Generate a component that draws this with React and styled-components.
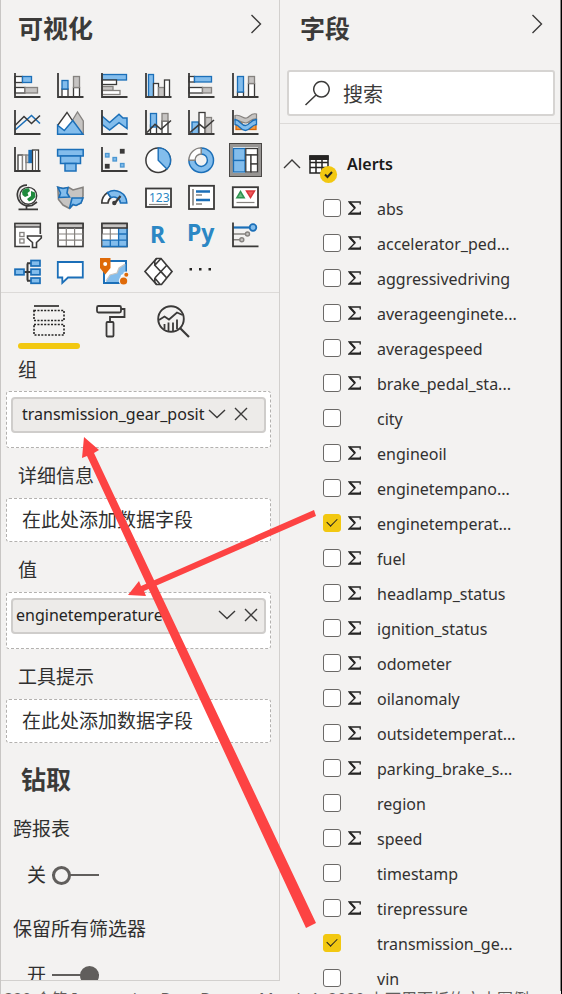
import React, { useState } from "react";
import styled, { createGlobalStyle } from "styled-components";

const INK = "#3b3a39";
const BLUE = "#1b6fb8";
const SKY = "#83bdec";
const GREY = "#c6c4c2";
const MID = "#85827f";

const GlobalStyle = createGlobalStyle`
  *, *::before, *::after { box-sizing: border-box; }
  body {
    margin: 0;
    background: #f3f2f1;
    color: #303030;
    font-family: "Noto Sans", "Noto Sans CJK SC", sans-serif;
  }
  button, input { font: inherit; color: inherit; }
  button { background: none; border: 0; padding: 0; cursor: pointer; }
`;

const Page = styled.div`
  position: relative;
  display: flex;
  flex-direction: column;
  height: 100vh;
  overflow: hidden;
  border-left: 1px solid #c8c6c4;
  border-right: 1px solid #000;
`;

const Panes = styled.main`
  flex: 1;
  min-height: 0;
  display: grid;
  grid-template-columns: minmax(0, 279fr) minmax(0, 281fr);
`;

const Pane = styled.section`
  display: flex;
  flex-direction: column;
  min-height: 0;
  overflow: hidden;
  border-right: 1px solid ${(p) => (p.$edge ? "#8a8886" : "#d2d0ce")};
  border-bottom: ${(p) => (p.$edge ? "0" : "1px solid #d2d0ce")};
  margin-bottom: ${(p) => (p.$edge ? "0" : "10px")};
`;

const Head = styled.header`
  display: flex;
  flex: none;
  align-items: flex-start;
  justify-content: space-between;
  height: ${(p) => p.$h}px;
  padding: 10px 17px 0 ${(p) => p.$pad}px;
`;

const Title = styled.h2`
  margin: 0;
  font-size: 25px;
  line-height: 36px;
  font-weight: 700;
  color: #3b3a39;
`;

const IconButton = styled.button`
  display: flex;
  align-items: center;
  justify-content: center;
  flex: none;
  width: ${(p) => p.$w || 24}px;
  height: 28px;
`;

const Gallery = styled.div`
  display: grid;
  flex: none;
  grid-template-columns: repeat(6, minmax(0, 1fr));
  grid-auto-rows: 37px;
  justify-items: center;
  align-items: center;
  padding: 0 12px 3px 4px;
  border-bottom: 1px solid #dcdad8;
`;

const Visual = styled.button`
  display: flex;
  align-items: center;
  justify-content: center;
  width: 33px;
  height: 34px;
  border: ${(p) => (p.$on ? "1px solid #4a4846" : "0")};
  box-shadow: ${(p) => (p.$on ? "inset 0 0 0 3px #979593" : "none")};
`;

const Tabs = styled.div`
  display: flex;
  flex: none;
  padding: 4px 0 0 17px;
`;

const Tab = styled.button`
  display: flex;
  flex-direction: column;
  align-items: center;
  justify-content: space-between;
  width: 62px;
  height: 52px;
  padding-top: 7px;
  &::after {
    content: "";
    width: 100%;
    height: 6px;
    border-radius: 3px;
    background: ${(p) => (p.$on ? "#f2c811" : "transparent")};
  }
`;

const Well = styled.div`
  flex: none;
`;

const WellLabel = styled.h3`
  margin: 0;
  padding: ${(p) => (p.$first ? 7 : 14)}px 17px 0;
  height: ${(p) => (p.$first ? 42 : 50)}px;
  font-size: 19px;
  line-height: 28px;
  font-weight: 400;
`;

const Drop = styled.div`
  margin: 0 8px 0 5px;
  padding: ${(p) => (p.$filled ? "5px 4px 14px 4px" : "0 15px")};
  border: 1px dashed #b3b1af;
  border-radius: 3px;
  background: #fff;
  font-size: 19px;
  line-height: 42px;
`;

const Pill = styled.div`
  display: flex;
  align-items: center;
  height: 36px;
  padding: 0 ${(p) => (p.$wide ? 1 : 11)}px 2px ${(p) => (p.$wide ? 3 : 9)}px;
  border: 2px solid #cfcdcb;
  border-radius: 4px;
  background: #edebe9;
  font-size: 16px;
  line-height: 28px;
  color: #252423;
`;

const PillText = styled.span`
  flex: 1;
  min-width: 0;
  white-space: nowrap;
`;

const Section = styled.h2`
  flex: none;
  margin: 0;
  padding: 18px 20px 0;
  height: 72px;
  font-size: 25px;
  line-height: 36px;
  font-weight: 700;
  color: #3b3a39;
`;

const Option = styled.div`
  flex: none;
  height: 100px;
  padding-left: 12px;
  font-size: 19px;
  line-height: 28px;
`;

const SwitchRow = styled.label`
  display: flex;
  align-items: center;
  gap: 6px;
  margin-top: 18px;
  padding-left: 14px;
`;

const Switch = styled.input`
  appearance: none;
  display: flex;
  align-items: center;
  width: 47px;
  height: 19px;
  margin: 0;
  justify-content: ${(p) => (p.checked ? "flex-end" : "flex-start")};
  background: linear-gradient(#605e5c, #605e5c) center / 100% 2px no-repeat;
  &::before {
    content: "";
    width: 19px;
    height: 19px;
    border: 3px solid #605e5c;
    border-radius: 50%;
    background: ${(p) => (p.checked ? "#605e5c" : "#f3f2f1")};
  }
`;

const SearchArea = styled.div`
  flex: none;
  padding: 0 5px 7px 7px;
  border-bottom: 1px solid #dcdad8;
`;

const SearchBox = styled.label`
  display: flex;
  align-items: center;
  gap: 13px;
  height: 46px;
  padding: 0 15px;
  border: 2px solid #d6d4d2;
  border-radius: 3px;
  background: #fff;
`;

const SearchInput = styled.input`
  flex: 1;
  min-width: 0;
  border: 0;
  padding: 4px 0 0;
  outline: 0;
  background: transparent;
  font-size: 20px;
  line-height: 28px;
  &::placeholder { color: #3b3a39; opacity: 1; }
`;

const TableRow = styled.div`
  display: flex;
  flex: none;
  align-items: center;
  height: 66px;
  padding: 13px 0 0 2px;
  font-size: 16px;
  font-weight: 600;
  color: #1b1a19;
`;

const TableIcon = styled.span`
  display: flex;
  width: 30px;
  height: 30px;
  margin: 10px 9px 0 6px;
`;

const Fields = styled.ul`
  flex: 1;
  min-height: 0;
  overflow: hidden;
  margin: 0;
  padding: 0;
  list-style: none;
`;

const FieldRow = styled.label`
  display: grid;
  grid-template-columns: 18px 13px minmax(0, 1fr);
  column-gap: 7px;
  align-items: center;
  height: 35px;
  padding-left: 43px;
  font-size: 16px;
  color: #323130;
`;

const Box = styled.input`
  appearance: none;
  width: 18px;
  height: 18px;
  margin: 0;
  border: 1px solid ${(p) => (p.checked ? "#f2c811" : "#6b6967")};
  border-radius: 3px;
  background: ${(p) => (p.checked ? "#f2c811" : "#fff")};
  display: grid;
  place-items: center;
  &::before {
    content: "";
    display: ${(p) => (p.checked ? "block" : "none")};
    width: 10px;
    height: 6px;
    border: solid #252423;
    border-width: 0 0 1px 1px;
    transform: rotate(-45deg);
    margin-bottom: 3px;
  }
`;

const FieldName = styled.span`
  padding: 2px 0 0 9px;
  white-space: nowrap;
  overflow: hidden;
`;

const Caption = styled.footer`
  flex: none;
  height: 3px;
  padding-left: 3px;
  overflow: hidden;
  font-size: 16px;
  line-height: 17px;
  white-space: nowrap;
  color: #605e5c;
`;

const Arrows = styled.svg`
  position: absolute;
  top: 0;
  left: -1px;
  pointer-events: none;
`;

function R({ x, y, x2, y2, f = "#fff", s = INK, w = 1.3 }) {
  return <rect x={x} y={y} width={x2 - x} height={y2 - y} fill={f} stroke={s} strokeWidth={w} />;
}
function L({ d, s = INK, w = 1.6, f = "none" }) {
  return <path d={d} stroke={s} strokeWidth={w} fill={f} />;
}
const Axis = () => <L d="M2 1V25H27.5" w={1.8} />;

const visuals = [
  ["堆积条形图", <>
    <R x={2} y={4.5} x2={9.5} y2={10.5} /><R x={9.5} y={4.5} x2={18.5} y2={10.5} f={SKY} s={BLUE} />
    <R x={2} y={15.5} x2={12} y2={21} /><R x={12} y={15.5} x2={24.5} y2={21} f={GREY} s={MID} /><Axis /></>],
  ["堆积柱形图", <>
    <R x={6} y={17} x2={12} y2={25} /><R x={6} y={8.5} x2={12} y2={17} f={SKY} s={BLUE} />
    <R x={17.5} y={15.5} x2={23.5} y2={25} /><R x={17.5} y={4.5} x2={23.5} y2={15.5} f={GREY} s={MID} /><Axis /></>],
  ["簇状条形图", <>
    <R x={2} y={2.5} x2={26.5} y2={8} f={SKY} s={BLUE} /><R x={2} y={8} x2={16.5} y2={12.5} />
    <R x={2} y={14.5} x2={13} y2={18.5} f={GREY} s={MID} /><R x={2} y={18.5} x2={20} y2={22.5} s={MID} /><Axis /></>],
  ["簇状柱形图", <>
    <R x={4.5} y={2.5} x2={9.5} y2={25} f={SKY} s={BLUE} /><R x={9.5} y={11.5} x2={14.5} y2={25} />
    <R x={14.5} y={15.5} x2={20.5} y2={25} f={GREY} s={MID} /><R x={20.5} y={8} x2={25.5} y2={25} /><Axis /></>],
  ["百分比堆积条形图", <>
    <R x={2} y={4.5} x2={7.5} y2={10} /><R x={7.5} y={4.5} x2={24.5} y2={10} f={SKY} s={BLUE} />
    <R x={2} y={15.5} x2={15.5} y2={21} /><R x={15.5} y={15.5} x2={24.5} y2={21} f={GREY} s={MID} /><Axis /></>],
  ["百分比堆积柱形图", <>
    <R x={6.5} y={20} x2={12.5} y2={25} /><R x={6.5} y={4.5} x2={12.5} y2={20} f={SKY} s={BLUE} />
    <R x={17.5} y={11.5} x2={23.5} y2={25} /><R x={17.5} y={4.5} x2={23.5} y2={11.5} f={GREY} s={MID} /><Axis /></>],
  ["折线图", <>
    <L d="M2 21L18.5 6.5L27 14.5" s={BLUE} /><L d="M2 16.5L11 7.5L18.5 14.5L27 6.5" /><Axis /></>],
  ["分区图", <>
    <L d="M16 12L21.5 3L27.3 12V25.3H16Z" f={GREY} s={MID} w={1.3} />
    <L d="M1.6 16.5L11 3.5L18 14V25.3H1.6Z" f="#fff" w={1.3} />
    <L d="M1.6 25.3V16.3L8.3 21.5L16.8 11.5L27 25.3Z" f={SKY} s={BLUE} w={1.4} /></>],
  ["堆积面积图", <>
    <L d="M2 7L9.6 13.6L19 5.3L23 9H27V19.6L19 13.6L9.6 21L2 15.3Z" f={SKY} s={BLUE} w={1.5} /><Axis /></>],
  ["折线和堆积柱形图", <>
    <R x={6.5} y={16} x2={12.5} y2={25} /><R x={6.5} y={4.5} x2={12.5} y2={18} f={SKY} s={BLUE} />
    <R x={18} y={12} x2={24} y2={25} /><R x={18} y={4.5} x2={24} y2={12} f={GREY} s={MID} />
    <L d="M3 23.5L11 15.3L17 20.3L27 11.5" /><Axis /></>],
  ["折线和簇状柱形图", <>
    <R x={5} y={13} x2={11.5} y2={25} f={SKY} s={BLUE} /><R x={12} y={3.5} x2={18} y2={25} />
    <R x={18.5} y={8.5} x2={24.5} y2={25} f={GREY} s={MID} /><L d="M3 23.5L12.5 15.3L17.5 19.3L27 11" /><Axis /></>],
  ["功能区图表", <>
    <R x={5} y={12} x2={11} y2={20.5} f="#f59b42" s="#d96a0b" /><R x={18} y={14} x2={25} y2={20.5} f="#f59b42" s="#d96a0b" />
    <L d="M4 6.5C10 5 12 10 15.5 9C19 8 20 3.5 25.5 5V10C20 9.5 19 13.5 15 14C11 14 9 11 4 11.5Z" f={GREY} s={MID} w={1.2} />
    <L d="M4 10.5C9 11 10 16.5 14.5 16.5C19 16.5 19 10.5 25.5 10.5V15.5C21 15.5 19 21.5 14.5 21.5C9 21.5 9 16 4 15.5Z" f={SKY} s={BLUE} w={1.3} /><Axis /></>],
  ["瀑布图", <>
    <R x={5} y={9} x2={9.5} y2={25} /><R x={9.5} y={9} x2={13} y2={25} s={MID} />
    <R x={13} y={9} x2={16.5} y2={16.5} f={GREY} s={MID} /><R x={16} y={4.5} x2={18.8} y2={16.5} f={BLUE} s={BLUE} />
    <R x={19.5} y={4} x2={25.5} y2={25} /><L d="M22.5 4V25" w={1} s={MID} /><Axis /></>],
  ["漏斗图", <>
    <R x={1.6} y={3.5} x2={27.2} y2={10} f={SKY} s={BLUE} w={1.5} /><R x={4.5} y={10} x2={24.5} y2={17.5} f={SKY} s={BLUE} w={1.5} />
    <R x={9} y={17.5} x2={20} y2={25} f={SKY} s={BLUE} w={1.5} /></>],
  ["散点图", <>
    <R x={20.5} y={3.5} x2={24} y2={7} f={INK} /><R x={5.5} y={7.5} x2={9} y2={11} f={SKY} s="#4a96d2" />
    <R x={13} y={11.5} x2={16.5} y2={15} f={SKY} s="#4a96d2" /><R x={5.5} y={18.5} x2={9} y2={22} f={INK} />
    <R x={20.5} y={17.5} x2={24} y2={21} f={SKY} s="#4a96d2" /><Axis /></>],
  ["饼图", <>
    <circle cx="14.2" cy="14.2" r="12.3" fill="#fff" stroke={INK} strokeWidth="1.5" />
    <L d="M14.2 14.2V1.9A12.3 12.3 0 0 1 22.9 22.9Z" f={SKY} s={BLUE} w={1.4} /></>],
  ["圆环图", <>
    <L d="M14.2 1.9A12.3 12.3 0 1 1 1.9 14.2H8A6.2 6.2 0 1 0 14.2 8Z" f={SKY} s={BLUE} w={1.5} />
    <L d="M14.2 1.9A12.3 12.3 0 0 0 1.9 14.2H8A6.2 6.2 0 0 1 14.2 8Z" f="#fff" s={MID} w={1.4} /></>],
  ["树状图", <>
    <R x={2.5} y={2.5} x2={14} y2={14.5} f={SKY} s={BLUE} /><R x={2.5} y={14.5} x2={14} y2={26} f={SKY} s={BLUE} />
    <R x={14.8} y={2.5} x2={26.5} y2={9} /><R x={14.8} y={9} x2={20} y2={26} /><R x={20} y={9} x2={26.5} y2={18} />
    <R x={20} y={18} x2={26.5} y2={26} /></>],
  ["地图", <>
    <circle cx="15.3" cy="12.8" r="8.4" fill="#fff" stroke={INK} strokeWidth="1.4" />
    <path d="M9 9C10 6 13 5 16 5.3L17 8L14.5 10L15.5 12.5L12 14L9.5 12ZM18 8L22 9.5L22.5 14L19.5 17L16 18.5L14 16L18 13Z" fill="#1f8a3d" />
    <L d="M14 2.2C6 2 3 9 5 15.5C7 21.5 13 24 19 22.5L24 19M13.5 23V26M5.5 26.3H25" w={1.7} /></>],
  ["着色地图", <>
    <L d="M1.8 4.2L7 5.5L13 4.5L17 7L27 4.2V13L25 20L20 22.5L17 21.5L13.5 25.5L7 22L2.5 16.5Z" f={GREY} s={MID} />
    <L d="M1.8 4.2L7 5.5L12 4.5L11 10L13.5 14L3 14.5L4.5 10Z" f={SKY} s={BLUE} />
    <L d="M16 15H27L25 20L20 22.5L17 21.5L13.5 25.5Z" f={SKY} s={BLUE} /></>],
  ["仪表", <>
    <L d="M1.8 20A12.5 12.5 0 0 1 7.5 9.6L11 14.5A7 7 0 0 0 8 20Z" f="#fff" s={INK} />
    <L d="M7.5 9.6A12.5 12.5 0 0 1 26.8 20H20.5A7 7 0 0 0 11 14.5Z" f={SKY} s={BLUE} />
    <L d="M14.5 20.5L20.5 13" w={2.2} /><circle cx="14.3" cy="20" r="2.2" fill={INK} /></>],
  ["卡片图", <>
    <R x={2} y={5.5} x2={27} y2={24} w={1.8} />
    <text x="5" y="19" fontFamily="Noto Sans" fontSize="12" fill="#2b87c4">123</text><L d="M5 21.5H24" s={MID} w={1.2} /></>],
  ["多行卡", <>
    <R x={2} y={2.8} x2={27} y2={26} w={1.8} /><L d="M6 6V22.5" s={MID} w={1.6} />
    <L d="M9 8.5H23M9 17H23" s={BLUE} w={2.6} /><L d="M9 12H15M9 21H15" s={MID} w={1.6} /></>],
  ["KPI", <>
    <R x={1.8} y={4.2} x2={27} y2={24.3} w={1.8} /><L d="M5.8 14.8L9.5 8.5L13.2 14.8Z" s="#2f9350" f="#6bbd83" w={1.5} />
    <L d="M15.5 8H23.5L19.5 14.5Z" s="#d9363b" f="#ee5a5e" w={1.5} /><L d="M5.5 19.5H23.5" s={MID} w={1.2} /></>],
  ["切片器", <>
    <L d="M17 26.5H2V3.5H27.3V14" f="#fff" /><R x={2} y={3.5} x2={27.3} y2={7} f={GREY} />
    <R x={6.8} y={12.5} x2={11} y2={16.5} s={MID} /><R x={6.8} y={19} x2={11} y2={23} s={MID} />
    <L d="M14.5 16H28.3V18L23.5 22.5V27.5H19.5V22.5L14.5 18Z" f="#fff" /></>],
  ["表", <>
    <R x={2} y={3.5} x2={27} y2={26.5} w={1.6} /><R x={2} y={3.5} x2={27} y2={8} f={GREY} w={1.6} />
    <L d="M10.3 8V26M18.6 8V26M2 14H27M2 20.2H27" s={MID} w={1.2} /></>],
  ["矩阵", <>
    <R x={2} y={3.5} x2={27} y2={26.5} w={1.6} /><path d="M18.5 8H26.5V26H2.5V20H10V14H18.5Z" fill={SKY} />
    <path d="M2.5 14H18.5V20H2.5ZM10 8H18.5V14H10Z" fill="#fff" />
    <L d="M10.3 20V26.5M18.6 8V26.5M18.6 14H27M2 20.2H27M2 26.5H27V8" s={BLUE} w={1.3} />
    <L d="M10.3 8V20M2 14H18" s={MID} w={1.1} /><R x={2} y={3.5} x2={27} y2={8} f={GREY} w={1.6} /></>],
  ["R 脚本", <text x="6" y="22.5" fontFamily="Noto Sans" fontSize="23" fontWeight="700" fill="#2b87c4">R</text>],
  ["Python", <text x="0" y="21" fontFamily="Noto Sans" fontSize="23" fontWeight="700" fill="#2b87c4">Py</text>],
  ["关键影响者", <>
    <L d="M2 7.5H19" s={BLUE} w={2.2} /><L d="M2 14H15M2 19.7H9" s={MID} w={1.4} />
    <circle cx="22" cy="7.5" r="3.3" fill={SKY} stroke={BLUE} strokeWidth="1.8" />
    <circle cx="16.5" cy="14" r="2" fill={GREY} stroke={MID} strokeWidth="1.4" />
    <circle cx="10.8" cy="19.7" r="2" fill={GREY} stroke={MID} strokeWidth="1.4" />
    <L d="M2 2.5V26.3H27.5" w={1.8} /></>],
  ["分解树", <>
    <L d="M11 15H18M14.5 6.5V23.5M14 6.3H18M14 23.7H18" w={2} />
    <R x={2} y={12.2} x2={11} y2={17.8} f={SKY} s={BLUE} w={1.7} /><R x={18} y={3.5} x2={27} y2={9} f={SKY} s={BLUE} w={1.7} />
    <R x={18} y={12.2} x2={27} y2={17.8} f={SKY} s={BLUE} w={1.7} /><R x={18} y={21} x2={27} y2={26.3} f={SKY} s={BLUE} w={1.7} /></>],
  ["问答", <L d="M1.8 5H26.8V20.5H12L6.3 26V20.5H1.8Z" f="#fff" s={BLUE} w={1.8} />],
  ["ArcGIS", <>
    <R x={4} y={4} x2={26} y2={26} s={BLUE} w={2} />
    <path d="M25.5 7L19 11L17 16L10 18L6 25H19L21 18L25.5 16Z" fill={SKY} />
    <L d="M25 7L19 11L17 16L10 18L6 24" s={GREY} w={1.2} />
    <path d="M0 1H10.5V11L5.2 17.5L0 11Z" fill="#df6a08" /><circle cx="5.2" cy="7" r="2" fill="#fff" />
    <circle cx="23.6" cy="24" r="4.8" fill="#f3f2f1" /><circle cx="26.3" cy="17.8" r="3.2" fill="#f3f2f1" />
    <circle cx="23.6" cy="24" r="3.6" fill="#df6a08" /><circle cx="26.3" cy="17.8" r="2" fill="#df6a08" /></>],
  ["Power Apps", <>
    <L d="M12.5 1.5H17L28 14.5L17.5 27.5H12.5L1 14.5Z" f="#fff" w={1.7} />
    <L d="M17 1.5L10.8 8.3L22.8 21M10.8 21L22.8 8.3M10.8 21L16 27.3M12.5 1.5L10.8 4V8.3M10.8 21V25L12.5 27.5M22.8 21L17 14.5" w={1.6} /></>],
  ["更多", <path d="M2.5 11h2.5v2.5h-2.5zM12 11h2.5v2.5h-2.5zM21.5 11h2.5v2.5h-2.5z" fill="#252423" />],
];

const fields = [
  ["abs", 1], ["accelerator_ped...", 1], ["aggressivedriving", 1], ["averageenginete...", 1],
  ["averagespeed", 1], ["brake_pedal_sta...", 1], ["city", 0], ["engineoil", 1], ["enginetempano...", 1],
  ["enginetemperat...", 1], ["fuel", 1], ["headlamp_status", 1], ["ignition_status", 1], ["odometer", 1],
  ["oilanomaly", 1], ["outsidetemperat...", 1], ["parking_brake_s...", 1], ["region", 0], ["speed", 1],
  ["timestamp", 0], ["tirepressure", 1], ["transmission_ge...", 0], ["vin", 0],
];

function Glyph({ w = 12, h = 20, d, sw = 1.4 }) {
  return (
    <svg width={w} height={h} viewBox={`0 0 ${w} ${h}`} fill="none" stroke="#3b3a39" strokeWidth={sw} aria-hidden="true">
      <path d={d} />
    </svg>
  );
}

function Sigma() {
  return (
    <svg width="13" height="14" viewBox="0 0 13 14" aria-hidden="true">
      <path d="M12.2 3.4V1H1.2L7 7L1 13H12.4V10.4" fill="none" stroke="#252423" strokeWidth="1.3" />
      <path d="M1.5 1L7 7" stroke="#252423" strokeWidth="2" />
      <path d="M3 12.3H12" stroke="#252423" strokeWidth="1.6" />
    </svg>
  );
}

function FilledWell({ text, wide }) {
  return (
    <Drop $filled>
      <Pill $wide={wide}>
        <PillText>{text}</PillText>
        <IconButton $w={24} aria-label="字段选项"><Glyph w={18} h={12} d="M1 2L9 9.5L17 2" /></IconButton>
        <IconButton $w={24} aria-label="删除字段"><Glyph w={14} h={14} d="M1 1L13 13M13 1L1 13" /></IconButton>
      </Pill>
    </Drop>
  );
}

function Toggle({ title, initial }) {
  const [on, setOn] = useState(initial);
  return (
    <Option>
      {title}
      <SwitchRow>
        {on ? "开" : "关"}
        <Switch type="checkbox" role="switch" aria-label={title} checked={on} onChange={() => setOn(!on)} />
      </SwitchRow>
    </Option>
  );
}

function Visualizations() {
  return (
    <Pane>
      <Head $h={67} $pad={17}>
        <Title>可视化</Title>
        <IconButton $w={12} aria-label="折叠"><Glyph d="M1.5 1L10.5 10L1.5 19" /></IconButton>
      </Head>
      <Gallery>
        {visuals.map(([name, art]) => (
          <Visual key={name} aria-label={name} $on={name === "树状图"}>
            <svg width="28" height="28" viewBox="0 0 28 28" overflow="visible">{art}</svg>
          </Visual>
        ))}
      </Gallery>
      <Tabs>
        <Tab $on aria-label="字段">
          <svg width="34" height="34" viewBox="0 0 34 34" fill="none" stroke="#252423">
            <path d="M2 2H27" strokeWidth="1.6" />
            <path d="M2 6.5H32V16.5H2ZM2 20.5H32V31H2Z" strokeWidth="1.6" strokeDasharray="2 1.4" />
          </svg>
        </Tab>
        <Tab aria-label="格式">
          <svg width="32" height="34" viewBox="0 0 32 34" fill="none" stroke="#3b3a39" strokeWidth="1.8">
            <rect x="2" y="2" width="24" height="6.5" rx="1.5" />
            <path d="M26 5H29.5V13H15V18" /><rect x="11.5" y="18" width="7" height="14.5" rx="1" />
          </svg>
        </Tab>
        <Tab aria-label="分析">
          <svg width="34" height="34" viewBox="0 0 34 34" fill="none" stroke="#3b3a39" strokeWidth="1.9">
            <circle cx="15" cy="15" r="12.8" /><path d="M24 24L33 33" strokeWidth="2.2" />
            <path d="M3 16L8.5 12.5L13 15.5L21 8.5L26.5 11M8.5 20V25M12.5 18.5V27M17 18.5V27M21 15.5V25" strokeWidth="1.8" />
          </svg>
        </Tab>
      </Tabs>
      <Well><WellLabel $first>组</WellLabel><FilledWell text="transmission_gear_posit" /></Well>
      <Well><WellLabel>详细信息</WellLabel><Drop>在此处添加数据字段</Drop></Well>
      <Well><WellLabel>值</WellLabel><FilledWell text="enginetemperature" wide /></Well>
      <Well><WellLabel>工具提示</WellLabel><Drop>在此处添加数据字段</Drop></Well>
      <Section>钻取</Section>
      <Toggle title="跨报表" initial={false} />
      <Toggle title="保留所有筛选器" initial />
    </Pane>
  );
}

function FieldList() {
  const [checked, setChecked] = useState({ "enginetemperat...": true, "transmission_ge...": true });
  return (
    <Pane $edge>
      <Head $h={70} $pad={20}>
        <Title>字段</Title>
        <IconButton $w={12} aria-label="折叠"><Glyph d="M1.5 1L10.5 10L1.5 19" /></IconButton>
      </Head>
      <SearchArea>
        <SearchBox>
          <Glyph w={26} h={26} d="M17.5 1.5A7.7 7.7 0 1 1 17.4 1.5ZM12 15L1.5 25" sw={1.5} />
          <SearchInput placeholder="搜索" aria-label="搜索" />
        </SearchBox>
      </SearchArea>
      <TableRow>
        <IconButton $w={20} aria-label="折叠 Alerts"><Glyph w={18} h={12} d="M1 10L9 2L17 10" /></IconButton>
        <TableIcon>
          <svg width="30" height="30" viewBox="0 0 30 30">
            <path d="M2 2H20V19H2ZM2 8.5H20M2 13.5H20M8 5V19M14 5V19" fill="#fff" stroke="#252423" strokeWidth="1.5" />
            <path d="M1.3 1.3H20.7V6H1.3Z" fill="#252423" />
            <circle cx="20.5" cy="20.5" r="8.6" fill="#f2c811" />
            <path d="M17 20.5L19.5 23L24 18" stroke="#252423" strokeWidth="2" fill="none" />
          </svg>
        </TableIcon>
        Alerts
      </TableRow>
      <Fields>
        {fields.map(([name, numeric]) => (
          <li key={name}>
            <FieldRow>
              <Box type="checkbox" checked={!!checked[name]}
                onChange={() => setChecked({ ...checked, [name]: !checked[name] })} />
              {numeric ? <Sigma /> : <span />}
              <FieldName>{name}</FieldName>
            </FieldRow>
          </li>
        ))}
      </Fields>
    </Pane>
  );
}

export default function App() {
  return (
    <>
      <GlobalStyle />
      <Page>
        <Panes>
          <Visualizations />
          <FieldList />
        </Panes>
        <Caption>320 个简 Integration Data Demo - March 1, 2020 上可用面板的文本图例</Caption>
        <Arrows width="330" height="940" viewBox="0 0 330 940" fill="#fd4343" aria-hidden="true">
          <path d="M84 437L99 450L94 453L316 923L306 928L87 456L82 458Z" />
          <path d="M128 595L139 581L141 586L314 510L316 516L144 591L146 596Z" />
        </Arrows>
      </Page>
    </>
  );
}
